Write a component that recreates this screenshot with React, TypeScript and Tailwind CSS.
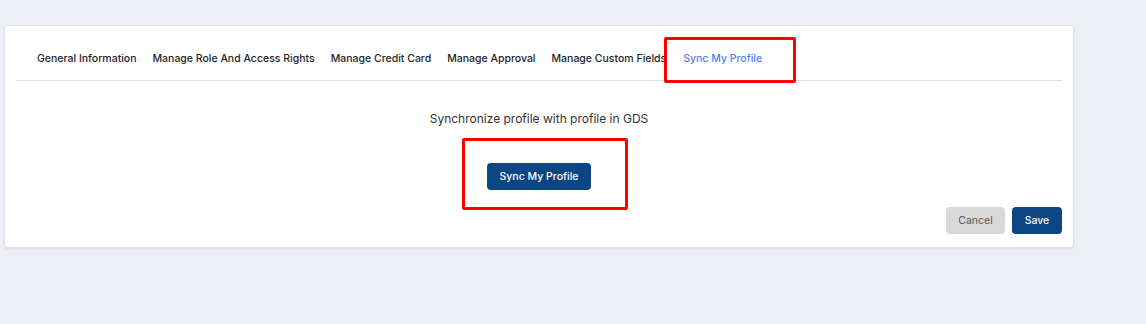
const tabs = [
  'General Information',
  'Manage Role And Access Rights',
  'Manage Credit Card',
  'Manage Approval',
  'Manage Custom Fields',
  'Sync My Profile',
];

export default function App() {
  return (
    <div className="min-h-screen w-[1146px] h-[324px] bg-[#ecf0f5] pt-[25px] pl-[4px] font-['Inter',sans-serif]">
      <div className="relative w-[1070px] rounded-[4px] border border-[#dfe2e6] bg-white px-[11px] pt-[11px] pb-[13px] shadow-[0_1px_2px_rgba(0,0,0,0.08)]">
        {/* Tabs */}
        <div className="flex h-[44px] items-center border-b border-[#dcdcdc] pl-[13px]">
          {tabs.map((t, i) => (
            <div
              key={t}
              className={
                i === tabs.length - 1
                  ? 'px-[8px] pl-[9px] text-[10.5px] font-medium text-[#4d82f3] whitespace-nowrap'
                  : 'px-[8px] text-[10.5px] font-medium text-[#1f2329] whitespace-nowrap'
              }
            >
              {t}
            </div>
          ))}
        </div>

        {/* Body */}
        <div className="flex flex-col items-center pt-[30px]">
          <p className="text-[12px] leading-[16px] text-[#333]">Synchronize profile with profile in GDS</p>
          <button className="mt-[36px] h-[27px] w-[104px] rounded-[4px] bg-[#0b4584] text-[10.5px] font-medium text-white">
            Sync My Profile
          </button>
        </div>

        {/* Footer */}
        <div className="mt-[17px] flex justify-end gap-[7px]">
          <button className="h-[27px] w-[59px] rounded-[4px] bg-[#d9d9d9] text-[10.5px] text-[#555]">Cancel</button>
          <button className="h-[27px] w-[50px] rounded-[4px] bg-[#0b4584] text-[10.5px] font-medium text-white">Save</button>
        </div>

        {/* Annotation boxes */}
        <div className="pointer-events-none absolute left-[659px] top-[11px] h-[46px] w-[132px] rounded-[2px] border-[3px] border-[#ff0000]" />
        <div className="pointer-events-none absolute left-[457px] top-[112px] h-[72px] w-[166px] rounded-[2px] border-[3px] border-[#ff0000]" />
      </div>
    </div>
  );
}
